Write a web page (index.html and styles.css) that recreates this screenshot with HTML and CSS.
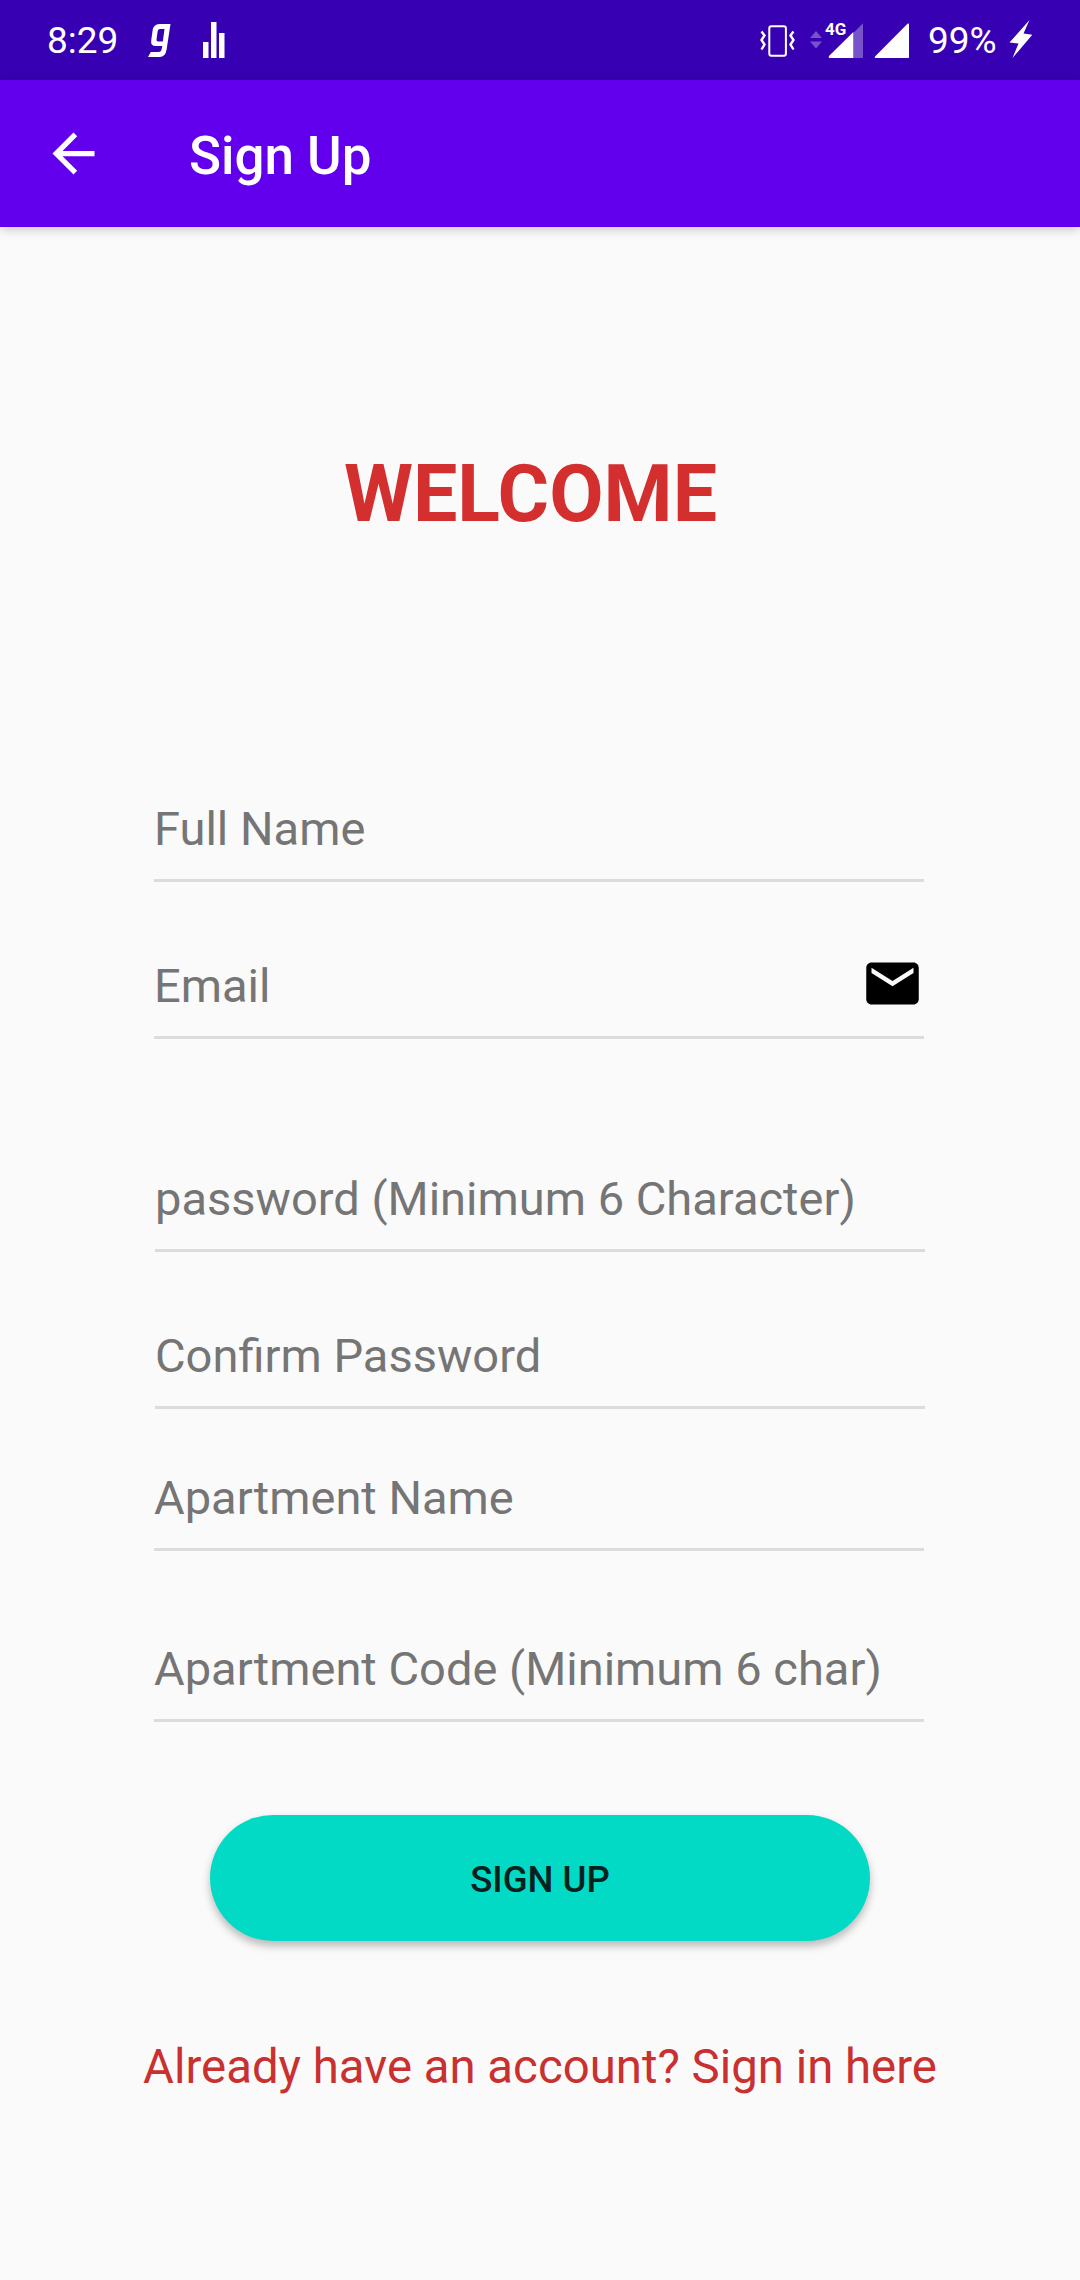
FILE: index.html
```html
<!DOCTYPE html>
<html lang="en">
<head>
<meta charset="utf-8">
<title>Sign Up</title>
<link rel="stylesheet" href="styles.css">
</head>
<body>
<div class="screen">
  <div class="status-bar">
    <span class="clock">8:29</span>
    <svg class="icon-g" viewBox="0 0 24 34" width="24" height="34"><path d="M22.500 0L18.700 25Q17.600 33 11.500 33H0L2.800 28H10.500Q13.200 28 13.700 25L14.300 22H8Q2.400 22 3.200 16.500L4.600 6.500Q5.500 0 11.500 0zM16.500 5H12Q10 5 9.700 7L8.500 15.500Q8.300 17.500 10 17.500H14.800z" fill="#fff" fill-rule="evenodd"/></svg>
    <svg class="icon-bars" viewBox="0 0 22 36" width="22" height="36"><path d="M0 20h5.500v16H0zM8 0h5.500v36H8zM16 11h5.500v25H16z" fill="#fff"/></svg>
    <div class="status-right">
      <svg class="icon-vibrate" viewBox="0 0 36 32" width="36" height="32"><g fill="none" stroke="#fff"><rect x="9.300" y="1.300" width="16.600" height="29.400" rx="2" stroke-width="2"/><path d="M1.500 6.500l3 4-3 4.500 3 4.500-3 5M33.500 6.500l-3 4 3 4.500-3 4.500 3 5" stroke-width="2.400"/></g></svg>
      <svg class="icon-data" viewBox="0 0 12 18" width="12" height="18"><path d="M6 0l6 7H0zM0 10.500h12L6 17.500z" fill="#fff" fill-opacity=".32"/></svg>
      <span class="signal-4g">
        <svg viewBox="0 0 36 36" width="36" height="36"><path d="M25.300 10L35 0.300V34.500L34 35H25.300z" fill="#fff" fill-opacity=".32"/><path d="M25.300 9V35H1.500Q0 34.500 1 33z" fill="#fff"/></svg>
        <span class="net">4G</span>
      </span>
      <svg class="icon-signal" viewBox="0 0 36 36" width="36" height="36"><path d="M35 .8V34.200Q35 35 34 35H1.500Q0 34.500 1 33.500L33.500.8Q34.500 0 35 .8z" fill="#fff"/></svg>
      <span class="battery">99%</span>
      <svg class="icon-bolt" viewBox="0 0 24 38" width="24" height="38"><path d="M20.500 0L0.500 22.500 9.500 23.500 3.500 38 23.300 14.800 14.500 13.500z" fill="#fff"/></svg>
    </div>
  </div>
  <header class="app-bar">
    <svg class="back" viewBox="0 0 24 24" width="63" height="63"><path d="M20 11H7.830l5.590-5.590L12 4l-8 8 8 8 1.410-1.410L7.830 13H20v-2z" fill="#fff"/></svg>
    <h1 class="title">Sign Up</h1>
  </header>
  <main class="content">
    <h2 class="welcome">WELCOME</h2>
    <form class="form">
      <div class="field"><span>Full Name</span></div>
      <div class="field email"><span>Email</span><svg class="mail" viewBox="0 0 24 24" width="63" height="63"><path d="M20 4H4c-1.100 0-1.990.9-1.990 2L2 18c0 1.100.9 2 2 2h16c1.100 0 2-.9 2-2V6c0-1.100-.9-2-2-2zm0 4l-8 5-8-5V6l8 5 8-5v2z"/></svg></div>
      <div class="field password"><span>password (Minimum 6 Character)</span></div>
      <div class="field confirm"><span>Confirm Password</span></div>
      <div class="field apartment"><span>Apartment Name</span></div>
      <div class="field code"><span>Apartment Code (Minimum 6 char)</span></div>
      <button class="submit" type="button">SIGN UP</button>
    </form>
    <p class="sign-in">Already have an account? Sign in here</p>
  </main>
</div>
</body>
</html>
```
FILE: styles.css
```css
* {
  box-sizing: border-box;
}

body {
  margin: 0;
  background: #fafafa;
  font-family: Roboto, "Noto Sans", sans-serif;
}

.screen {
  display: flex;
  flex-direction: column;
  width: 1080px;
  height: 2280px;
  overflow: hidden;
}

svg {
  display: block;
  flex: none;
}

.status-bar {
  display: flex;
  align-items: flex-start;
  height: 80px;
  padding-left: 47px;
  background: #3700b3;
  color: #fff;
  font-size: 37px;
  line-height: 44px;
}

.clock {
  width: 71px;
  margin-top: 19px;
}

.icon-g {
  margin: 24px 0 0 30px;
}

.icon-bars {
  margin: 22px 0 0 30.500px;
}

.status-right {
  display: flex;
  align-items: flex-start;
  margin-left: auto;
  padding-right: 47px;
}

.icon-vibrate {
  margin: 25px 14px 0 0;
}

.icon-data {
  margin: 31px 6px 0 0;
}

.signal-4g {
  position: relative;
  margin: 23px 10px 0 0;
}

.net {
  position: absolute;
  left: -3px;
  top: -4px;
  font-size: 17px;
  font-weight: 700;
  line-height: 20px;
}

.icon-signal {
  margin-top: 23px;
}

.battery {
  width: 72px;
  margin: 19px 9px 0 18px;
}

.icon-bolt {
  margin-top: 20px;
}

.app-bar {
  display: flex;
  align-items: center;
  flex: none;
  height: 147px;
  padding-left: 42px;
  background: #6200ee;
  box-shadow: 0 2px 10px rgba(0, 0, 0, .22);
  color: #fff;
}

.title {
  margin: 4px 0 0 84px;
  font-size: 52.900px;
  font-weight: 500;
  line-height: 62px;
}

.content {
  display: flex;
  flex-direction: column;
  align-items: center;
}

.welcome {
  margin: 221px 19px 0 0;
  color: #d32f2f;
  font-size: 78.900px;
  font-weight: 700;
  line-height: 92px;
}

.form {
  display: flex;
  flex-direction: column;
  width: 770px;
  margin: 259px 2px 0 0;
}

.field {
  display: flex;
  height: 83px;
  padding-bottom: 20px;
  border-bottom: 3px solid #dcdcdc;
  color: #757575;
  font-size: 47.050px;
  line-height: 60px;
  white-space: nowrap;
}

.email {
  justify-content: space-between;
  margin-top: 74px;
}

.mail {
  margin-top: -4px;
}

.password {
  margin: 130px -1px 0 1px;
}

.confirm {
  margin: 74px -1px 0 1px;
}

.apartment {
  margin-top: 59px;
}

.code {
  margin-top: 88px;
}

.submit {
  align-self: center;
  width: 660px;
  height: 126px;
  margin: 93px 0 0 2px;
  padding: 3px 0 0;
  border: 0;
  border-radius: 63px;
  background: #03dac5;
  box-shadow: 0 5px 8px rgba(0, 0, 0, .26);
  color: #04211e;
  font-family: inherit;
  font-size: 36.600px;
  font-weight: 500;
}

.sign-in {
  margin: 98px 0 0;
  color: #c93030;
  font-size: 47.350px;
  line-height: 56px;
  white-space: nowrap;
}
```
